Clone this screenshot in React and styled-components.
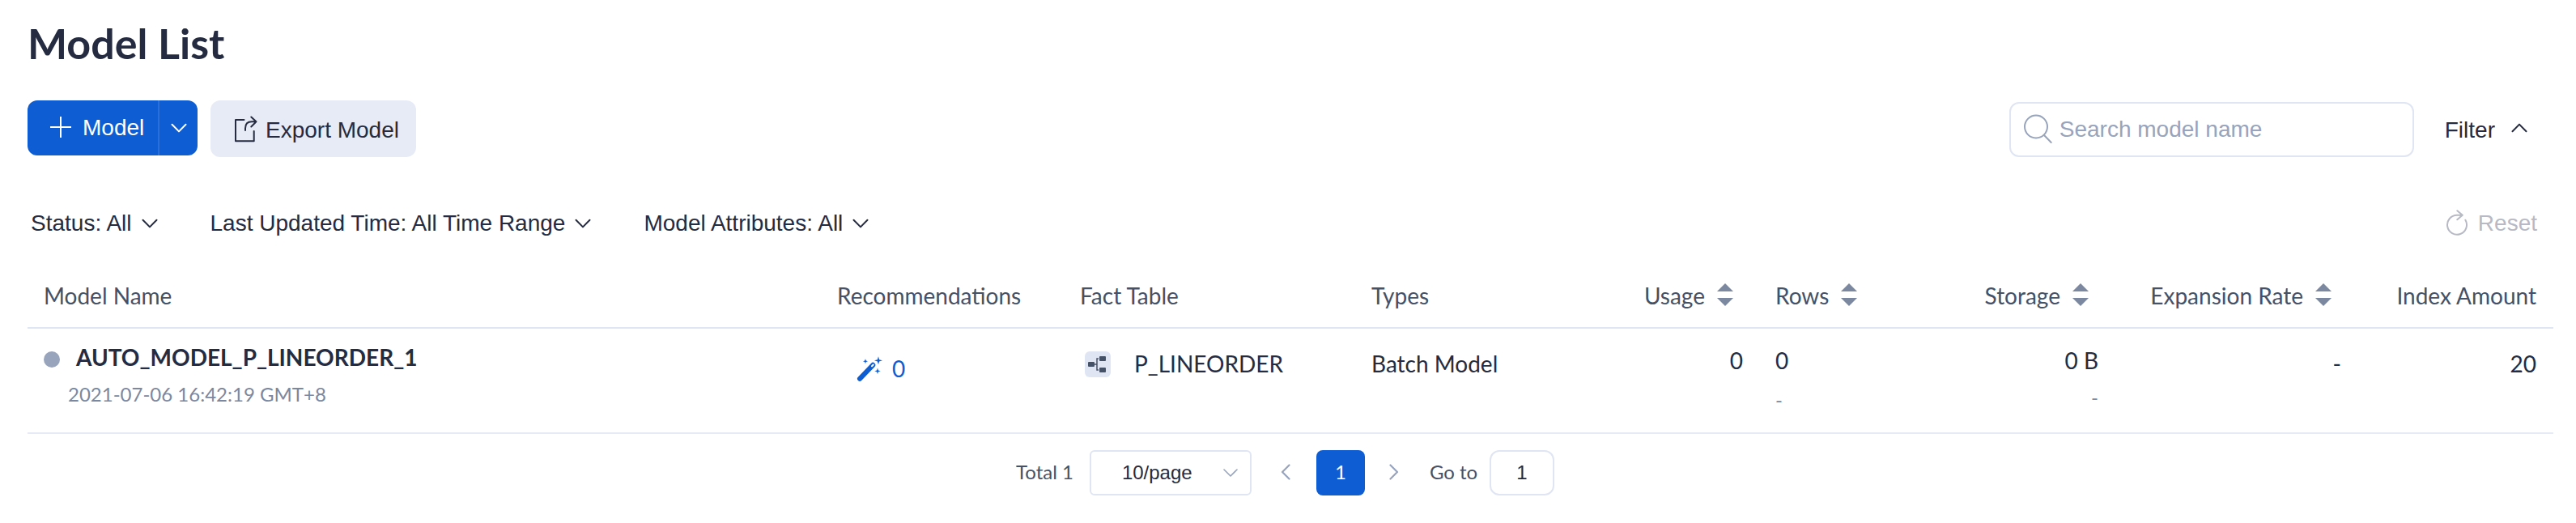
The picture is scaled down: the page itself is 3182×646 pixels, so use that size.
import React from "react";
import styled, { createGlobalStyle } from "styled-components";

const arial = `"Liberation Sans", Arial, sans-serif`;
const ink = "#252b40";
const blue = "#0e5dd2";

const Global = createGlobalStyle`
  * { box-sizing: border-box; }
  body { margin: 0; background: #fff; font-family: Lato, sans-serif; color: ${ink}; }
  button, input { font: inherit; color: inherit; margin: 0; }
  svg { display: block; flex: none; fill: none; stroke: currentColor; }
`;

const Page = styled.main`
  width: 3182px;
  height: 646px;
  padding: 22px 28px 0 34px;
  overflow: hidden;
`;
const Title = styled.h1`
  margin: 0;
  height: 102px;
  font-size: 52px;
  line-height: 63px;
  font-weight: 700;
`;
const Toolbar = styled.div`
  display: flex;
  align-items: flex-start;
  height: 70px;
  font-family: ${arial};
  font-size: 28px;
`;
const SplitButton = styled.div`
  display: flex;
  width: 210px;
  height: 68px;
  border-radius: 12px;
  background: ${blue};
  color: #fff;
  overflow: hidden;
`;
const SplitMain = styled.button`
  display: flex;
  align-items: center;
  gap: 14px;
  width: 163px;
  padding: 0 0 0 28px;
  border: 0;
  border-right: 2px solid #2a70d8;
  background: none;
  svg { margin-top: -3px; }
`;
const SplitArrow = styled.button`
  display: flex;
  flex: 1;
  padding: 28px 0 0 14px;
  border: 0;
  background: none;
`;
const ExportButton = styled.button`
  display: flex;
  align-items: center;
  gap: 10px;
  width: 254px;
  height: 70px;
  margin-left: 16px;
  padding: 4px 0 0 28px;
  border: 0;
  border-radius: 12px;
  background: #e7ebf6;
  svg { margin-top: -2px; }
`;
const Search = styled.label`
  display: flex;
  align-items: center;
  gap: 8px;
  width: 500px;
  height: 68px;
  margin: 2px 0 0 auto;
  padding: 0 14px;
  border: 2px solid #e0e5f3;
  border-radius: 12px;
  color: #97a4bc;
`;
const SearchInput = styled.input`
  flex: 1;
  min-width: 0;
  padding: 0;
  border: 0;
  outline: 0;
  background: none;
  &::placeholder { color: #97a4bc; opacity: 1; }
`;
const FilterToggle = styled.button`
  display: flex;
  align-items: center;
  gap: 20px;
  height: 70px;
  margin: 0 32px 0 38px;
  padding: 4px 0 0;
  border: 0;
  background: none;
  svg { margin-top: -6px; }
`;
const Filters = styled.div`
  display: flex;
  align-items: center;
  gap: 65px;
  height: 36px;
  margin: 64px 20px 0 4px;
  font-family: ${arial};
  font-size: 28px;
  line-height: 32px;
`;
const FilterItem = styled.div`
  display: flex;
  align-items: center;
  gap: 12px;
`;
const Reset = styled.div`
  display: flex;
  align-items: center;
  gap: 12px;
  margin-left: auto;
  color: #b7bac4;
`;
const Table = styled.div`
  width: 3120px;
  margin-top: 22px;
  font-size: 28px;
`;
const TableRow = styled.div`
  display: grid;
  grid-template-columns: 980px 300px 360px 255px 244px 220px 219px 300px 241px;
`;
const HeadRow = styled(TableRow)`
  height: 90px;
  border-bottom: 2px solid #e0e5f3;
  color: #455166;
  line-height: 34px;
`;
const BodyRow = styled(TableRow)`
  height: 130px;
  border-bottom: 2px solid #e6eaf7;
  line-height: 34px;
`;
const HeadCell = styled.div`
  display: flex;
  justify-content: ${(p) => (p.$right ? "flex-end" : "flex-start")};
  padding: 32px 20px 0;
  white-space: nowrap;
`;
const Sort = styled.span`
  display: flex;
  flex-direction: column;
  gap: 8px;
  width: 20px;
  margin: 2px 12px 0 15px;
  color: #7b889f;
  &::before, &::after {
    content: "";
    border: 10px solid transparent;
  }
  &::before { border-top: 0; border-bottom-color: currentColor; }
  &::after { border-bottom: 0; border-top-color: currentColor; }
`;
const Cell = styled.div`
  padding: ${(p) => p.$top ?? 26}px 20px 0;
  text-align: ${(p) => (p.$right ? "right" : "left")};
  white-space: nowrap;
`;
const NameLine = styled.div`
  display: flex;
  align-items: center;
  gap: 20px;
  font-weight: 700;
`;
const Dot = styled.i`
  width: 20px;
  height: 20px;
  margin-top: 6px;
  border-radius: 50%;
  background: #97a4bc;
`;
const Time = styled.div`
  margin: 14px 0 0 30px;
  font-size: 24px;
  line-height: 30px;
  color: #7b889f;
`;
const Advice = styled.div`
  display: flex;
  align-items: center;
  gap: 12px;
  padding-left: 24px;
  color: ${blue};
`;
const Fact = styled.div`
  display: flex;
  align-items: center;
  gap: 29px;
  padding-left: 6px;
  svg { margin-top: 2px; }
`;
const Sub = styled.div`
  margin-top: ${(p) => p.$gap}px;
  font-size: 24px;
  line-height: 30px;
  color: #7b889f;
`;
const Pager = styled.div`
  display: flex;
  align-items: center;
  height: 56px;
  margin: 20px 0 0 1221px;
  font-size: 24px;
  line-height: 30px;
  color: #455166;
`;
const Total = styled.span`
  padding-bottom: 3px;
`;
const PageSize = styled.div`
  display: flex;
  align-items: center;
  justify-content: space-between;
  width: 200px;
  height: 56px;
  margin-left: 20px;
  padding: 0 15px 0 38px;
  border: 2px solid #e0e5f3;
  border-radius: 6px;
  font-family: ${arial};
  color: ${ink};
  svg { color: #97a4bc; }
`;
const Step = styled.button`
  display: flex;
  justify-content: center;
  width: 80px;
  padding: ${(p) => (p.$next ? "0 7px 2px 0" : "0 0 2px 5px")};
  border: 0;
  background: none;
  color: #97a4bc;
`;
const Current = styled.button`
  width: 60px;
  height: 56px;
  padding: 0 0 3px;
  border: 0;
  border-radius: 8px;
  background: ${blue};
  color: #fff;
`;
const GoTo = styled.span`
  width: 74px;
  padding-bottom: 3px;
`;
const GoInput = styled.input`
  width: 80px;
  height: 56px;
  padding: 0;
  border: 2px solid #e0e5f3;
  border-radius: 12px;
  outline: 0;
  font-family: ${arial};
  color: ${ink};
  text-align: center;
`;

const Chevron = ({ up }) => (
  <svg width="20" height="12" viewBox="0 0 20 12" strokeWidth="2" strokeLinecap="round" strokeLinejoin="round">
    <path d={up ? "M1.5 10.2 10 1.6l8.500 8.600" : "M1.500 1.800 10 10.400l8.500-8.600"} />
  </svg>
);
const SelectChevron = () => (
  <svg width="18" height="10" viewBox="0 0 18 10" strokeWidth="1.6" strokeLinecap="round" strokeLinejoin="round">
    <path d="m1 1 8 8 8-8" />
  </svg>
);
const PlusIcon = () => (
  <svg width="26" height="26" viewBox="0 0 26 26" strokeWidth="2">
    <path d="M13 0v26M0 13h26" />
  </svg>
);
const ExportIcon = () => (
  <svg width="30" height="34" viewBox="0 0 30 34" strokeWidth="2" strokeLinecap="round" strokeLinejoin="round">
    <path d="M13.500 5H3v26.300h22.700V19M15 18v-2.500c0-5.300 3-8.200 8-8.200h5.500M22.300 1.500l6.200 5.800-6.200 6.200" />
  </svg>
);
const SearchIcon = () => (
  <svg width="38" height="38" viewBox="0 0 38 38" strokeWidth="2" strokeLinecap="round">
    <circle cx="17" cy="15.500" r="14" />
    <path d="m27 26 8.700 9" />
  </svg>
);
const ResetIcon = () => (
  <svg width="28" height="34" viewBox="0 0 28 34" strokeWidth="2" strokeLinecap="round" strokeLinejoin="round">
    <path d="M24.400 12.700A12 12 0 1 1 14 6.700h6.500M14.300 1.300l6.500 5.400-6.500 5.600" />
  </svg>
);
const WandIcon = () => (
  <svg width="32" height="34" viewBox="0 0 32 34">
    <path d="M4 29.800 20.300 12.800" strokeWidth="6" strokeLinecap="round" />
    <path d="m19 14.300 1.700-1.800" stroke="#fff" strokeWidth="2" strokeLinecap="round" />
    <path stroke="none" fill="currentColor" d="M27 2.300l1.100 3.900L32 7.300l-3.900 1.100L27 12.300l-1.100-3.900L22 7.300l3.900-1.100zM11 5.300l.8 2.200 2.200.8-2.200.8-.8 2.200-.8-2.200-2.200-.8 2.200-.8zM26 16.600l.9 2.800 2.800.9-2.800.9-.9 2.800-.9-2.800-2.800-.9 2.800-.9z" />
  </svg>
);
const FactIcon = () => (
  <svg width="32" height="32" viewBox="0 0 32 32">
    <rect width="32" height="32" rx="6" fill="#e0e5f3" stroke="none" />
    <g fill="#455166" stroke="none">
      <rect x="4" y="13" width="8" height="6" rx="1" />
      <rect x="18" y="6" width="8" height="6" rx="1" />
      <rect x="18" y="20" width="8" height="6" rx="1" />
    </g>
    <path d="M12 16h3M17 9h-2v14h2" stroke="#455166" strokeWidth="1.500" />
  </svg>
);
const StepIcon = ({ next }) => (
  <svg width="12" height="20" viewBox="0 0 12 20" strokeWidth="2.200" strokeLinecap="round" strokeLinejoin="round">
    <path d={next ? "m1.500 1.500 8.500 8.500-8.500 8.500" : "M10.500 1.500 2 10l8.500 8.500"} />
  </svg>
);

const columns = [
  { label: "Model Name" },
  { label: "Recommendations" },
  { label: "Fact Table" },
  { label: "Types" },
  { label: "Usage", right: true, sort: true },
  { label: "Rows", sort: true },
  { label: "Storage", right: true, sort: true },
  { label: "Expansion Rate", right: true, sort: true },
  { label: "Index Amount", right: true },
];
const filters = ["Status: All", "Last Updated Time: All Time Range", "Model Attributes: All"];

export default function App() {
  return (
    <Page>
      <Global />
      <Title>Model List</Title>
      <Toolbar>
        <SplitButton>
          <SplitMain><PlusIcon />Model</SplitMain>
          <SplitArrow><Chevron /></SplitArrow>
        </SplitButton>
        <ExportButton><ExportIcon />Export Model</ExportButton>
        <Search>
          <SearchIcon />
          <SearchInput placeholder="Search model name" />
        </Search>
        <FilterToggle>Filter<Chevron up /></FilterToggle>
      </Toolbar>
      <Filters>
        {filters.map((label) => (
          <FilterItem key={label}>{label}<Chevron /></FilterItem>
        ))}
        <Reset><ResetIcon />Reset</Reset>
      </Filters>
      <Table>
        <HeadRow>
          {columns.map((c) => (
            <HeadCell key={c.label} $right={c.right}>{c.label}{c.sort && <Sort />}</HeadCell>
          ))}
        </HeadRow>
        <BodyRow>
          <Cell $top={18}>
            <NameLine><Dot />AUTO_MODEL_P_LINEORDER_1</NameLine>
            <Time>2021-07-06 16:42:19 GMT+8</Time>
          </Cell>
          <Cell $top={32}><Advice><WandIcon />0</Advice></Cell>
          <Cell><Fact><FactIcon />P_LINEORDER</Fact></Cell>
          <Cell>Batch Model</Cell>
          <Cell $top={22} $right>0</Cell>
          <Cell $top={22}>0<Sub $gap={17}>-</Sub></Cell>
          <Cell $top={22} $right>0 B<Sub $gap={14}>-</Sub></Cell>
          <Cell $right>-</Cell>
          <Cell $right>20</Cell>
        </BodyRow>
      </Table>
      <Pager>
        <Total>Total 1</Total>
        <PageSize>10/page<SelectChevron /></PageSize>
        <Step aria-label="Previous"><StepIcon /></Step>
        <Current>1</Current>
        <Step $next aria-label="Next"><StepIcon next /></Step>
        <GoTo>Go to</GoTo>
        <GoInput defaultValue="1" />
      </Pager>
    </Page>
  );
}
